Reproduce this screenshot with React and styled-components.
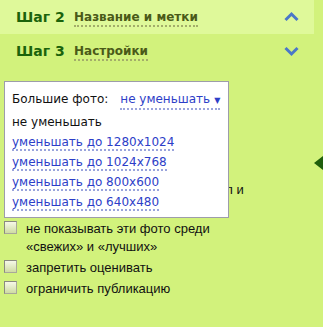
import React from 'react';
import styled, { createGlobalStyle } from 'styled-components';

const Global = createGlobalStyle`
  html, body { margin: 0; padding: 0; }
  body { background: #d2f27c; }
`;

const Page = styled.div`
  position: relative;
  width: 323px;
  height: 327px;
  overflow: hidden;
  background: #d2f27c;
  font-family: "Liberation Sans", Arial, sans-serif;
`;

const StepHeader = styled.div`
  display: flex;
  align-items: center;
  height: 34px;
  width: 314px;
  box-sizing: border-box;
  padding: 0 15px 0 16px;
  background: ${p => (p.$open ? '#dff99a' : 'transparent')};
  font-family: "DejaVu Sans", Verdana, sans-serif;
  font-weight: bold;
`;

const StepNum = styled.span`
  font-size: 14px;
  color: #1b630b;
  width: 58px;
  flex-shrink: 0;
`;

const StepTitle = styled.span`
  font-size: 12px;
  color: #4a5a18;
  padding-bottom: 1px;
  border-bottom: 2px dotted #a3ad6a;
  margin-top: 3px;
`;

const Chevron = styled.svg`
  margin-left: auto;
`;

const Settings = styled.div`
  position: relative;
  padding: 113px 0 0 4px;
`;

const Row = styled.label`
  display: flex;
  align-items: flex-start;
  gap: 9px;
  font-size: 13px;
  line-height: 18px;
  color: #111;
  margin-bottom: 3px;
  max-width: ${p => p.$max || 'none'};
`;

const Box = styled.span`
  flex-shrink: 0;
  width: 11px;
  height: 11px;
  margin-top: 1px;
  border: 1px solid #8a8a80;
  border-right-color: #a8a89a;
  border-bottom-color: #a8a89a;
  background: linear-gradient(#f6f8e8, #cfdca2);
`;

const Popup = styled.div`
  position: absolute;
  left: 4px;
  top: 81px;
  width: 225px;
  height: 137px;
  box-sizing: border-box;
  background: #fff;
  border: 1px solid #9d9daa;
  padding: 10px 0 0 7px;
  font-family: "DejaVu Sans", Verdana, sans-serif;
  font-size: 12px;
`;

const PopupHead = styled.div`
  display: flex;
  align-items: baseline;
  color: #111;
  height: 22px;
`;

const Current = styled.span`
  margin-left: 12px;
  color: #2d3ec8;
  border-bottom: 2px dotted #9aa4dc;
  line-height: 14px;
`;

const Arrow = styled.span`
  font-size: 8px;
  margin-left: 4px;
`;

const Option = styled.div`
  height: 20px;
  line-height: 16px;
  span {
    color: ${p => (p.$selected ? '#111' : '#2d3ec8')};
    border-bottom: ${p => (p.$selected ? 'none' : '2px dotted #9aa4dc')};
  }
`;

const Pointer = styled.div`
  position: absolute;
  right: 0;
  top: 156px;
  width: 0;
  height: 0;
  border-top: 7px solid transparent;
  border-bottom: 7px solid transparent;
  border-right: 9px solid #1f5e0c;
`;

const up = 'M1.5 9 L7.5 3 L13.5 9';
const down = 'M1.5 3 L7.5 9 L13.5 3';

function Step({ num, title, open }) {
  return (
    <StepHeader $open={open}>
      <StepNum>Шаг {num}</StepNum>
      <StepTitle>{title}</StepTitle>
      <Chevron width="15" height="12" viewBox="0 0 15 12">
        <path d={open ? up : down} fill="none" stroke="#4a78c8" strokeWidth="3" />
      </Chevron>
    </StepHeader>
  );
}

const options = [
  'не уменьшать',
  'уменьшать до 1280x1024',
  'уменьшать до 1024x768',
  'уменьшать до 800x600',
  'уменьшать до 640x480',
];

export default function App() {
  return (
    <Page>
      <Global />
      <Step num="2" title="Название и метки" open />
      <Step num="3" title="Настройки" />
      <Settings>
        <Row $max="262px"><Box />разрешить скачивать целый файл и печатать</Row>
        <Row><Box />не показывать эти фото среди<br />«свежих» и «лучших»</Row>
        <Row><Box />запретить оценивать</Row>
        <Row><Box />ограничить публикацию</Row>
      </Settings>
      <Popup>
        <PopupHead>
          Большие фото:
          <Current>не уменьшать<Arrow>▼</Arrow></Current>
        </PopupHead>
        {options.map((o, i) => (
          <Option key={o} $selected={i === 0}><span>{o}</span></Option>
        ))}
      </Popup>
      <Pointer />
    </Page>
  );
}
